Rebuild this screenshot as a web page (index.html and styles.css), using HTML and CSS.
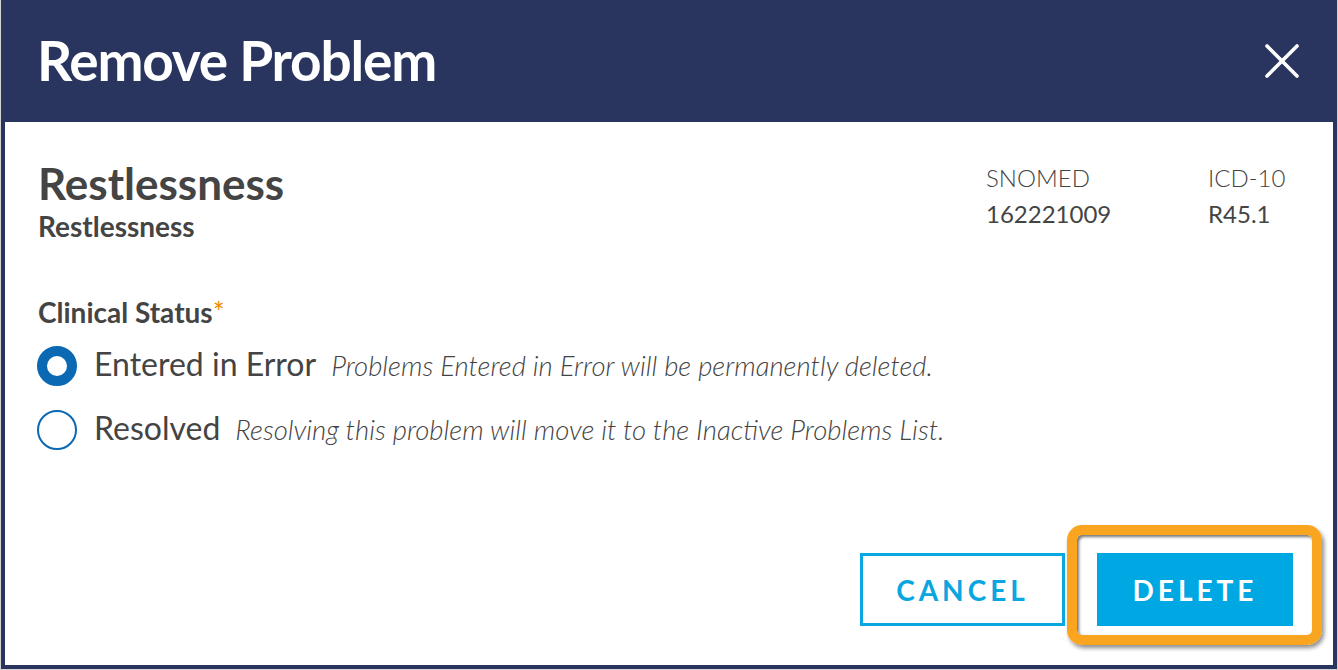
FILE: index.html
```html
<!DOCTYPE html>
<html lang="en">
<head>
<meta charset="utf-8">
<title>Remove Problem</title>
<link rel="stylesheet" href="styles.css">
</head>
<body>
<div class="modal">
  <header class="modal-header">
    <h1 class="modal-title">Remove Problem</h1>
    <button class="close-btn" aria-label="Close">
      <svg width="34" height="34" viewBox="0 0 34 34"><path d="M2 2 L32 32 M32 2 L2 32" stroke="#fff" stroke-width="3.6" stroke-linecap="round" fill="none"/></svg>
    </button>
  </header>
  <div class="modal-body">
    <div class="problem-row">
      <div class="problem-names">
        <div class="problem-title">Restlessness</div>
        <div class="problem-sub">Restlessness</div>
      </div>
      <div class="codes">
        <div class="code-label">SNOMED</div>
        <div class="code-label">ICD-10</div>
        <div class="code-value">162221009</div>
        <div class="code-value">R45.1</div>
      </div>
    </div>
    <div class="field-label">Clinical Status<span class="req">*</span></div>
    <div class="radio-row first">
      <span class="radio checked"></span>
      <span class="radio-text"><span class="radio-label">Entered in Error</span><span class="radio-help">Problems Entered in Error will be permanently deleted.</span></span>
    </div>
    <div class="radio-row">
      <span class="radio"></span>
      <span class="radio-text"><span class="radio-label">Resolved</span><span class="radio-help">Resolving this problem will move it to the Inactive Problems List.</span></span>
    </div>
  </div>
  <footer class="modal-footer">
    <button class="btn btn-outline">CANCEL</button>
    <div class="focus-wrap">
      <button class="btn btn-primary">DELETE</button>
      <span class="highlight"></span>
    </div>
  </footer>
</div>
</body>
</html>
```

FILE: styles.css
```css
* { box-sizing: border-box; }
html, body { margin: 0; padding: 0; }
body {
  background: #d4d4d4;
  font-family: Lato, "Open Sans", sans-serif;
  color: #444444;
  width: 1338px;
  height: 670px;
  overflow: hidden;
}
.modal {
  margin-left: 1px;
  width: 1336px;
  height: 669px;
  background: #ffffff;
  border: 4px solid #29355f;
  border-top: 0;
  display: flex;
  flex-direction: column;
}
.modal-header {
  height: 122px;
  background: #29355f;
  margin: 0 -4px;
  padding: 0 38px 3px 36px;
  display: flex;
  align-items: center;
  justify-content: space-between;
}
.modal-title {
  margin: 0;
  color: #ffffff;
  font-size: 55px;
  font-weight: 700;
  letter-spacing: -1.2px;
  line-height: 1.2;
}
.close-btn {
  background: none;
  border: 0;
  padding: 0;
  margin-top: 3px;
  width: 34px;
  height: 34px;
  display: block;
}
.close-btn svg { display: block; }
.modal-body {
  padding: 35px 33px 0 32px;
}
.problem-row {
  display: flex;
  justify-content: space-between;
  align-items: flex-start;
}
.problem-title {
  font-size: 44px;
  font-weight: 700;
  line-height: 1.2;
  padding-left: 1px;
}
.problem-sub {
  font-size: 28px;
  font-weight: 700;
  line-height: 1.2;
  padding-left: 1px;
}
.codes {
  display: grid;
  grid-template-columns: 222px 92px;
  row-gap: 7px;
  margin-top: 7px;
}
.code-label {
  font-size: 24px;
  font-weight: 300;
  line-height: 1.2;
}
.code-value {
  font-size: 24px;
  font-weight: 400;
  line-height: 1.2;
}
.field-label {
  margin-top: 53px;
  font-size: 28px;
  font-weight: 700;
  line-height: 1.2;
  padding-left: 1px;
}
.req { color: #f08c00; font-weight: 400; }
.radio-row {
  display: flex;
  align-items: center;
  height: 64px;
}
.radio-row.first { margin-top: 4px; }
.radio {
  width: 40px;
  height: 40px;
  border-radius: 50%;
  border: 2px solid #0b69b3;
  flex: none;
  margin-right: 17px;
}
.radio.checked { border-width: 10px; }
.radio-text {
  line-height: 1.2;
  padding-bottom: 3px;
}
.radio-label {
  font-size: 32px;
  font-weight: 400;
  margin-right: 15px;
}
.radio-help {
  font-size: 27.5px;
  font-weight: 300;
  font-style: italic;
}
.modal-footer {
  margin-top: auto;
  display: flex;
  justify-content: flex-end;
  align-items: center;
  gap: 32px;
  padding: 0 40px 39px 0;
}
.btn {
  height: 73px;
  font-family: Lato, "Open Sans", sans-serif;
  font-size: 28px;
  font-weight: 700;
  letter-spacing: 4px;
  padding: 0;
  border-radius: 0;
}
.btn-outline {
  width: 205px;
  background: #ffffff;
  color: #0aa6e0;
  border: 3px solid #0aa6e0;
}
.btn-primary {
  width: 196px;
  background: #00a8e3;
  color: #ffffff;
  border: 0;
  display: block;
}
.focus-wrap { position: relative; }
.highlight {
  position: absolute;
  left: -30px;
  right: -29px;
  top: -28px;
  bottom: -19px;
  border: 10px solid #f9a51f;
  border-radius: 15px;
  box-shadow: inset 2px 2px 3px rgba(0,0,0,0.55), 2px 3px 4px rgba(0,0,0,0.45);
  pointer-events: none;
}
```
